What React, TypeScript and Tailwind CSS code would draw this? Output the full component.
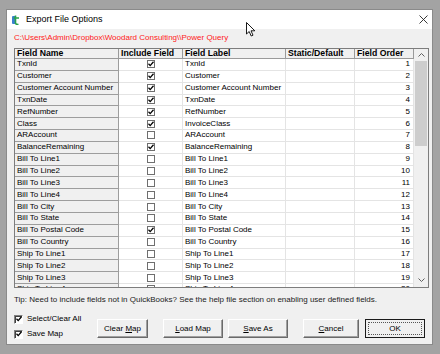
import React from "react";

interface Row {
  name: string;
  include: boolean;
  label: string;
  order: number;
}

const rows: Row[] = [
  { name: "TxnId", include: true, label: "TxnId", order: 1 },
  { name: "Customer", include: true, label: "Customer", order: 2 },
  { name: "Customer Account Number", include: true, label: "Customer Account Number", order: 3 },
  { name: "TxnDate", include: true, label: "TxnDate", order: 4 },
  { name: "RefNumber", include: true, label: "RefNumber", order: 5 },
  { name: "Class", include: true, label: "InvoiceClass", order: 6 },
  { name: "ARAccount", include: false, label: "ARAccount", order: 7 },
  { name: "BalanceRemaining", include: true, label: "BalanceRemaining", order: 8 },
  { name: "Bill To Line1", include: false, label: "Bill To Line1", order: 9 },
  { name: "Bill To Line2", include: false, label: "Bill To Line2", order: 10 },
  { name: "Bill To Line3", include: false, label: "Bill To Line3", order: 11 },
  { name: "Bill To Line4", include: false, label: "Bill To Line4", order: 12 },
  { name: "Bill To City", include: false, label: "Bill To City", order: 13 },
  { name: "Bill To State", include: false, label: "Bill To State", order: 14 },
  { name: "Bill To Postal Code", include: true, label: "Bill To Postal Code", order: 15 },
  { name: "Bill To Country", include: false, label: "Bill To Country", order: 16 },
  { name: "Ship To Line1", include: false, label: "Ship To Line1", order: 17 },
  { name: "Ship To Line2", include: false, label: "Ship To Line2", order: 18 },
  { name: "Ship To Line3", include: false, label: "Ship To Line3", order: 19 },
  { name: "Ship To Line4", include: false, label: "Ship To Line4", order: 20 },
];

const Check = () => (
  <svg width="6" height="6" viewBox="0 0 6 6">
    <path d="M0.5 2.8 L2.2 4.6 L5.5 0.8" fill="none" stroke="#000" strokeWidth="1.3" />
  </svg>
);

const GridCheck = ({ on }: { on: boolean }) => (
  <div className="w-[8px] h-[8px] border border-[#6f6f6f] bg-white flex items-center justify-center">
    {on && <Check />}
  </div>
);

const SunkenCheck = ({ on }: { on: boolean }) => (
  <div className="w-[9px] h-[9px] border border-t-[#808080] border-l-[#808080] border-b-white border-r-white bg-white flex items-center justify-center shadow-[inset_1px_1px_0_#404040]">
    {on && <Check />}
  </div>
);

const Button = ({
  children,
  className,
  primary,
}: {
  children: React.ReactNode;
  className: string;
  primary?: boolean;
}) => (
  <div
    className={`h-[19px] flex items-center justify-center text-[8px] text-black ${
      primary
        ? "border border-[#1a1a1a] bg-[#f0f0f0] p-[2px]"
        : "border border-t-white border-l-white border-r-[#6a6a6a] border-b-[#6a6a6a] bg-[#f0f0f0] shadow-[inset_-1px_-1px_0_#a0a0a0]"
    } ${className}`}
  >
    {primary ? (
      <div className="w-full h-full border border-dotted border-[#555] flex items-center justify-center">
        {children}
      </div>
    ) : (
      children
    )}
  </div>
);

export default function App() {
  return (
    <div className="w-[440px] h-[354px] bg-[#a3a3a3] pt-[9px] pl-[6px] font-['Liberation_Sans',Arial,sans-serif] relative overflow-hidden">
      <div className="w-[427px] h-[336px] border border-[#8a8a8a] bg-[#f0f0f0] flex flex-col">
        {/* Title bar */}
        <div className="h-[19px] bg-white flex items-center pl-[5px] pr-[4px] shrink-0">
          <svg width="8" height="10" viewBox="0 0 8 10">
            <rect x="0" y="1" width="4" height="8" rx="1" fill="#3b7fd0" />
            <path d="M3.5 0.5 V8 Q3.5 9.5 6.5 9.5 M1.5 3 H7" fill="none" stroke="#2aa34a" strokeWidth="1.6" />
          </svg>
          <span className="ml-[6px] text-[9px] text-black">Export File Options</span>
          <svg className="ml-auto" width="9" height="9" viewBox="0 0 9 9">
            <path d="M0.5 0.5 L8.5 8.5 M8.5 0.5 L0.5 8.5" stroke="#222" strokeWidth="0.9" />
          </svg>
        </div>

        <div className="pl-[7px] pr-[3px] flex flex-col">
          {/* Path */}
          <div className="mt-[3px] h-[11px] text-[8px] leading-[11px] text-[#ff1a1a] whitespace-nowrap">
            C:\Users\Admin\Dropbox\Woodard Consulting\\Power Query
          </div>

          {/* Grid */}
          <div className="mt-[5px] w-[415px] h-[240px] border border-[#7d7d7d] bg-white flex overflow-hidden">
            <div className="w-[399px] h-[238px] overflow-hidden">
              <div className="grid grid-cols-[104px_64px_103px_69px_59px] h-[10px] text-[8.7px] font-bold leading-[9px]">
                <div className="bg-[#f0f0f0] border-r border-b border-[#9a9a9a] pl-[2px]">Field Name</div>
                <div className="bg-[#f0f0f0] border-r border-b border-[#9a9a9a] pl-[2px]">Include Field</div>
                <div className="bg-[#f0f0f0] border-r border-b border-[#9a9a9a] pl-[2px]">Field Label</div>
                <div className="bg-[#f0f0f0] border-r border-b border-[#9a9a9a] pl-[2px]">Static/Default</div>
                <div className="bg-[#f0f0f0] border-r border-b border-[#9a9a9a] pl-[2px]">Field Order</div>
              </div>
              {rows.map((r) => (
                <div
                  key={r.order}
                  className="grid grid-cols-[104px_64px_103px_69px_59px] h-[11.85px] text-[8px] leading-[10px] text-black"
                >
                  <div className="bg-[#f0f0f0] border-r border-b border-[#9d9d9d] pl-[2px] whitespace-nowrap flex items-center">
                    {r.name}
                  </div>
                  <div className="border-r border-b border-[#e4e4e4] flex items-center justify-center">
                    <GridCheck on={r.include} />
                  </div>
                  <div className="border-r border-b border-[#e4e4e4] pl-[2px] whitespace-nowrap flex items-center">
                    {r.label}
                  </div>
                  <div className="border-r border-b border-[#e4e4e4]" />
                  <div className="border-r border-b border-[#e4e4e4] pr-[3px] flex items-center justify-end">
                    {r.order}
                  </div>
                </div>
              ))}
            </div>
            {/* Scrollbar */}
            <div className="w-[14px] bg-[#f0f0f0] flex flex-col items-center">
              <div className="h-[12px] flex items-center justify-center">
                <svg width="7" height="4" viewBox="0 0 7 4">
                  <path d="M0.5 3.5 L3.5 0.5 L6.5 3.5" fill="none" stroke="#606060" strokeWidth="1" />
                </svg>
              </div>
              <div className="w-[12px] h-[85px] bg-[#cdcdcd]" />
              <div className="flex-1" />
              <div className="h-[14px] flex items-center justify-center">
                <svg width="7" height="4" viewBox="0 0 7 4">
                  <path d="M0.5 0.5 L3.5 3.5 L6.5 0.5" fill="none" stroke="#606060" strokeWidth="1" />
                </svg>
              </div>
            </div>
          </div>

          {/* Tip */}
          <div className="mt-[7px] text-[8px] leading-[10px] text-[#222] whitespace-nowrap">
            Tip: Need to include fields not in QuickBooks? See the help file section on enabling user defined fields.
          </div>

          {/* Bottom */}
          <div className="mt-[9px] flex">
            <div className="w-[83px] flex flex-col gap-[5px]">
              <div className="flex items-center gap-[4px] text-[8px] leading-[10px]">
                <SunkenCheck on />
                <span>Select/Clear All</span>
              </div>
              <div className="flex items-center gap-[4px] text-[8px] leading-[10px]">
                <SunkenCheck on />
                <span>Save Map</span>
              </div>
            </div>
            <Button className="mt-[5px] w-[51px]">
              <span>
                Clear <u>M</u>ap
              </span>
            </Button>
            <Button className="mt-[5px] ml-[15px] w-[60px]">
              <span>
                <u>L</u>oad Map
              </span>
            </Button>
            <Button className="mt-[5px] ml-[5px] w-[60px]">
              <span>
                <u>S</u>ave As
              </span>
            </Button>
            <Button className="mt-[5px] ml-[15px] w-[56px]">
              <span>
                <u>C</u>ancel
              </span>
            </Button>
            <Button className="mt-[5px] ml-[6px] w-[60px]" primary>
              <span>OK</span>
            </Button>
          </div>
        </div>
      </div>

      {/* Mouse pointer */}
      <svg className="absolute left-[246px] top-[22px]" width="10" height="15" viewBox="0 0 10 15">
        <path d="M0.5 0.5 V12 L3.2 9.5 L5.2 14 L7 13.2 L5 8.8 L8.8 8.8 Z" fill="#fff" stroke="#000" strokeWidth="0.9" />
      </svg>
    </div>
  );
}
